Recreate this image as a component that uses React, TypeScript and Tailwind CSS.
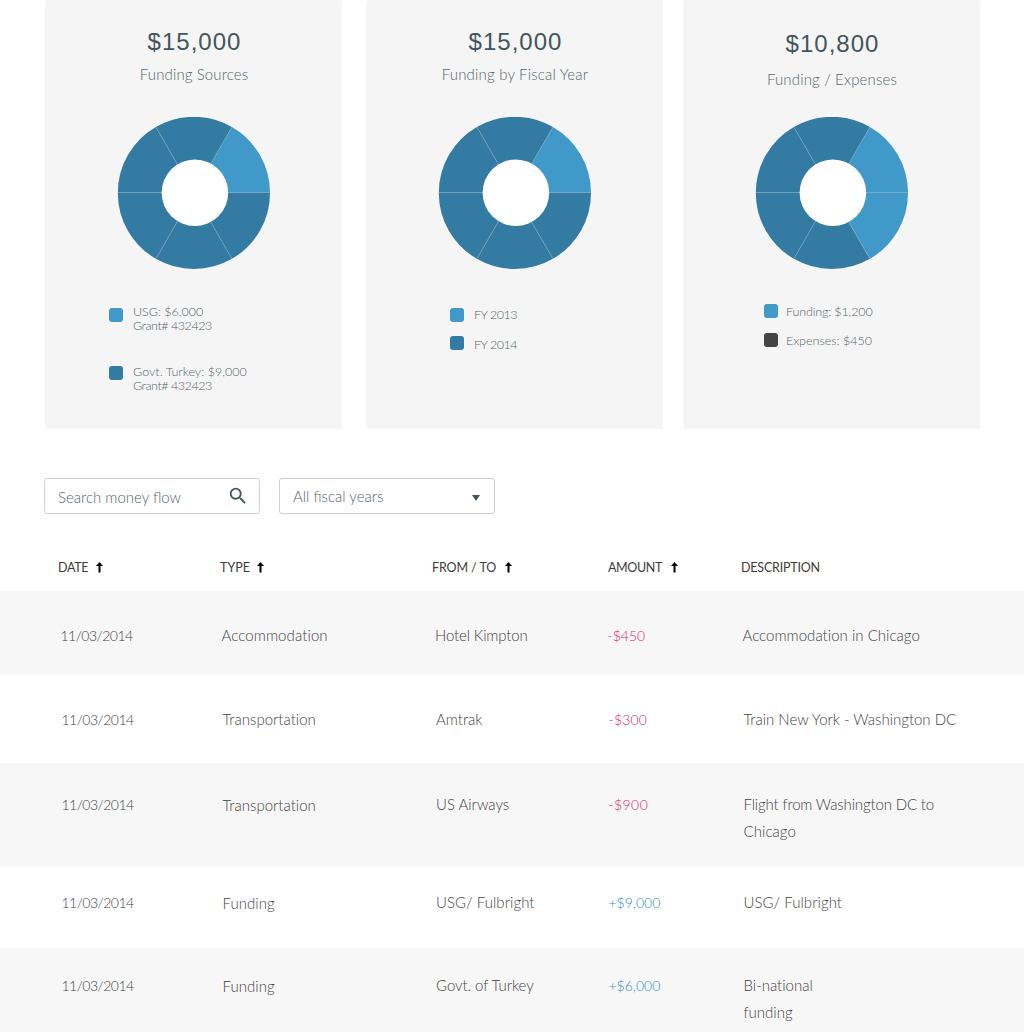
import type { ReactNode } from 'react'
import { MdSearch } from 'react-icons/md'

const DARK = '#337ba2'
const LIGHT = '#4199ca'

const point = (deg: number, r: number) => {
  const a = (deg * Math.PI) / 180
  return `${(76.9 + r * Math.cos(a)).toFixed(2)} ${(75.9 - r * Math.sin(a)).toFixed(2)}`
}

function Donut({ colors }: { colors: string[] }) {
  return (
    <svg className="block h-[153px] w-[153px]" viewBox="0 0 153 153">
      {colors.map((c, i) => (
        <path
          key={i}
          d={`M76.9 75.9 L${point(i * 60, 76.1)} A76.1 76.1 0 0 0 ${point(i * 60 + 60, 76.1)} Z`}
          fill={c}
        />
      ))}
      {[60, 120, 240, 300].map((d) => (
        <path key={d} d={`M76.9 75.9 L${point(d, 76)}`} stroke="#8fb4c8" strokeOpacity="0.6" strokeWidth="0.7" />
      ))}
      <path d="M1 75.5 H153" stroke="#8fb4c8" strokeOpacity="0.65" />
      <circle cx="77.9" cy="75.7" r="33.3" fill="#fff" />
    </svg>
  )
}

function Card({
  amount,
  title,
  head,
  titleClass,
  colors,
  children,
}: {
  amount: string
  title: string
  head: string
  titleClass: string
  colors: string[]
  children: ReactNode
}) {
  return (
    <section className="flex h-[429px] w-[297px] flex-col rounded-[3px] bg-[#f5f5f5] text-[#56666b]">
      <header className={`flex h-[117px] shrink-0 flex-col items-center ${head}`}>
        <h2 className="pl-[2px] font-['Liberation_Sans',sans-serif] text-[24px] leading-7 font-normal tracking-[1px] text-[#43555c]">
          {amount}
        </h2>
        <p className={`pl-px text-[15px] leading-5 whitespace-nowrap ${titleClass}`}>{title}</p>
      </header>
      <div className="flex justify-center">
        <Donut colors={colors} />
      </div>
      {children}
    </section>
  )
}

function Swatch({ className }: { className: string }) {
  return <span className={`size-3.5 shrink-0 rounded-[3px] ${className}`} />
}

function SortArrow() {
  return (
    <svg className="mt-px block h-[11px] w-[7px]" viewBox="0 0 7 11">
      <path d="M3.5 0 L7 4 H4.5 V10.5 H2.5 V4 H0 Z" fill="#000" />
    </svg>
  )
}

type Cell = [text: string, tracking: string]
type Row = { box: string; typeClass: string; date: string; type: Cell; from: Cell; amount: Cell; income: boolean; desc: Cell[] }

const rows: Row[] = [
  {
    box: 'h-[84px] pt-[31px] pl-[60px] bg-[#f7f7f7]',
    typeClass: '',
    date: '11/03/2014',
    type: ['Accommodation', 'tracking-[0.1px]'],
    from: ['Hotel Kimpton', 'tracking-[-0.15px]'],
    amount: ['-$450', ''],
    income: false,
    desc: [['Accommodation in Chicago', 'tracking-[0.03px]']],
  },
  {
    box: 'h-[88px] pt-[31px] pl-[61px] bg-white',
    typeClass: '',
    date: '11/03/2014',
    type: ['Transportation', ''],
    from: ['Amtrak', ''],
    amount: ['-$300', 'tracking-[0.2px]'],
    income: false,
    desc: [['Train New York - Washington DC', 'tracking-[-0.01px]']],
  },
  {
    box: 'h-[104px] pt-[28px] pl-[61px] bg-[#f7f7f7]',
    typeClass: 'pt-px',
    date: '11/03/2014',
    type: ['Transportation', ''],
    from: ['US Airways', ''],
    amount: ['-$900', 'tracking-[0.4px]'],
    income: false,
    desc: [
      ['Flight from Washington DC to', 'tracking-[-0.15px]'],
      ['Chicago', 'tracking-[0.05px]'],
    ],
  },
  {
    box: 'h-[81px] pt-[22px] pl-[61px] bg-white',
    typeClass: 'pt-px',
    date: '11/03/2014',
    type: ['Funding', 'tracking-[0.05px]'],
    from: ['USG/ Fulbright', 'tracking-[0.05px]'],
    amount: ['+$9,000', ''],
    income: true,
    desc: [['USG/ Fulbright', 'tracking-[0.05px]']],
  },
  {
    box: 'h-[84px] pt-[24px] pl-[61px] bg-[#f7f7f7]',
    typeClass: 'pt-px',
    date: '11/03/2014',
    type: ['Funding', 'tracking-[0.05px]'],
    from: ['Govt. of Turkey', 'tracking-[-0.05px]'],
    amount: ['+$6,000', ''],
    income: true,
    desc: [
      ['Bi-national', ''],
      ['funding', ''],
    ],
  },
]

export default function App() {
  return (
    <main className="flex h-[1032px] w-[1024px] flex-col overflow-hidden bg-white font-['Lato',sans-serif] font-light">
      <div className="flex pl-[45px]">
        <Card
          amount="$15,000"
          title="Funding Sources"
          head="pt-7"
          titleClass="mt-2 tracking-[0.12px]"
          colors={[LIGHT, DARK, DARK, DARK, DARK, DARK]}
        >
          <ul className="pt-[35px] pl-[64px] text-[12.5px] leading-[14px]">
            <li className="flex h-[60px] gap-2.5">
              <span className="pt-[3px]">
                <Swatch className="block bg-[#4199ca]" />
              </span>
              <span>
                <span className="block">USG: $6,000</span>
                <span className="block tracking-[-0.45px]">Grant# 432423</span>
              </span>
            </li>
            <li className="flex gap-2.5">
              <span className="pt-px">
                <Swatch className="block bg-[#337ba2]" />
              </span>
              <span>
                <span className="block tracking-[0.04px]">Govt. Turkey: $9,000</span>
                <span className="block tracking-[-0.45px]">Grant# 432423</span>
              </span>
            </li>
          </ul>
        </Card>
        <div className="w-6 shrink-0" />
        <Card
          amount="$15,000"
          title="Funding by Fiscal Year"
          head="pt-7"
          titleClass="mt-2 tracking-[0.2px]"
          colors={[LIGHT, DARK, DARK, DARK, DARK, DARK]}
        >
          <ul className="pt-[38px] pl-[84px] text-[12.5px] leading-[14px] tracking-[-0.5px]">
            <li className="flex h-[28px] gap-2.5">
              <Swatch className="bg-[#4199ca]" />
              <span>FY 2013</span>
            </li>
            <li className="flex gap-2.5">
              <Swatch className="bg-[#337ba2]" />
              <span className="pt-[2px]">FY 2014</span>
            </li>
          </ul>
        </Card>
        <div className="w-5 shrink-0" />
        <Card
          amount="$10,800"
          title="Funding / Expenses"
          head="pt-[30px]"
          titleClass="mt-[11px] tracking-[0.17px]"
          colors={[LIGHT, DARK, DARK, DARK, DARK, LIGHT]}
        >
          <ul className="pt-[34px] pl-[81px] text-[12.5px] leading-[14px]">
            <li className="flex h-[29px] gap-2">
              <Swatch className="bg-[#4199ca]" />
              <span className="pt-px tracking-[-0.14px]">Funding: $1,200</span>
            </li>
            <li className="flex gap-2">
              <Swatch className="bg-[#444]" />
              <span className="pt-px">Expenses: $450</span>
            </li>
          </ul>
        </Card>
      </div>

      <div className="mt-[49px] flex gap-[19px] pl-[44px] text-[15px] text-[#56666b]">
        <div className="flex h-9 w-[216px] justify-between rounded-[3px] border border-[#c8d2d0] pt-1.5 pr-[10px] pl-[13px]">
          <span className="pt-[2px] leading-5">Search money flow</span>
          <MdSearch className="size-[22px] text-[#43555c]" />
        </div>
        <div className="flex h-9 w-[216px] justify-between rounded-[3px] border border-[#c8d2d0] pt-[7px] pr-3.5 pl-[13px]">
          <span className="leading-5">All fiscal years</span>
          <svg className="mt-[9px] block h-[6px] w-2" viewBox="0 0 8 6">
            <path d="M0 0 H8 L4 6 Z" fill="#43555c" />
          </svg>
        </div>
      </div>

      <div className="grid h-[77px] shrink-0 grid-cols-[162px_212px_176px_133px_1fr] items-start pt-[47px] pl-[58px] text-[12.5px] leading-[14px] font-normal text-[#3c3c3c]">
        <span className="flex gap-[8px]">
          <span className="tracking-[-0.35px]">DATE</span>
          <SortArrow />
        </span>
        <span className="flex gap-[7px]">
          <span>TYPE</span>
          <SortArrow />
        </span>
        <span className="flex gap-[9px]">
          <span className="tracking-[-0.1px]">FROM / TO</span>
          <SortArrow />
        </span>
        <span className="flex gap-[9px]">
          <span className="tracking-[-0.35px]">AMOUNT</span>
          <SortArrow />
        </span>
        <span className="tracking-[-0.2px]">DESCRIPTION</span>
      </div>

      {rows.map((r, i) => (
        <div
          key={i}
          className={`grid shrink-0 grid-cols-[161px_214px_172px_135px_1fr] items-start text-[15px] leading-[27px] text-[#444] [font-variant-ligatures:none] ${r.box}`}
        >
          <span className="pl-[0.5px] text-[14px] tracking-[-0.5px]">{r.date}</span>
          <span className={`pl-[0.5px] ${r.typeClass} ${r.type[1]}`}>{r.type[0]}</span>
          <span className={r.from[1]}>{r.from[0]}</span>
          <span className={`pl-[0.5px] text-[14px] ${r.income ? 'text-[#2f90c6]' : 'text-[#dc1f5f]'} ${r.amount[1]}`}>
            {r.amount[0]}
          </span>
          <span className="pl-[0.5px]">
            {r.desc.map(([text, tracking]) => (
              <span key={text} className={`block ${tracking}`}>
                {text}
              </span>
            ))}
          </span>
        </div>
      ))}
    </main>
  )
}
